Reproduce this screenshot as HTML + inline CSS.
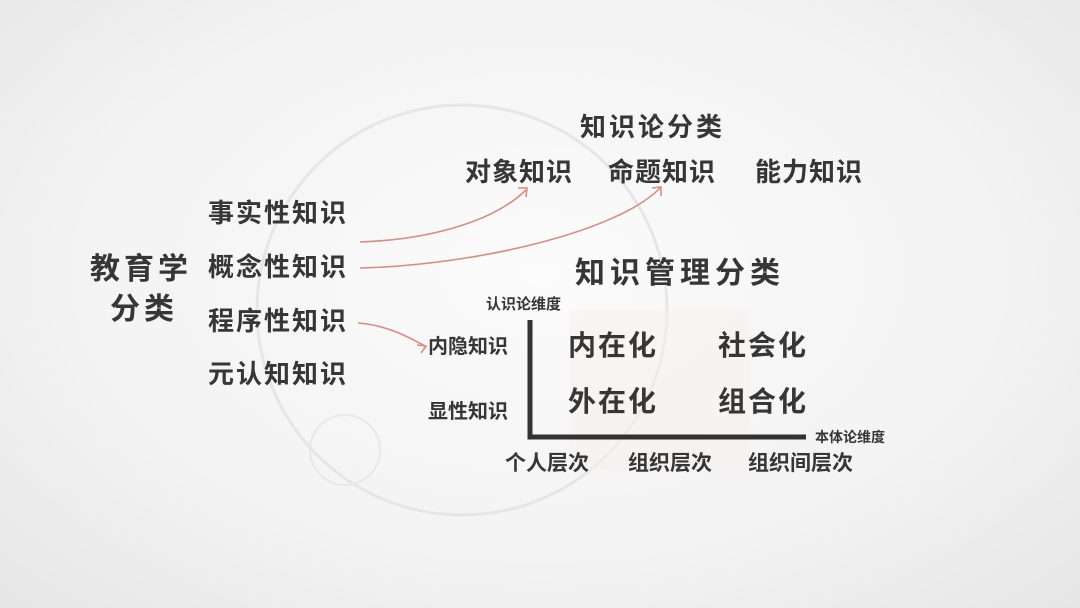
<!DOCTYPE html>
<html><head><meta charset="utf-8"><style>
html,body{margin:0;padding:0}
body{width:1080px;height:608px;position:relative;overflow:hidden;background:radial-gradient(ellipse at 50% 45%,#fbfbfb 0%,#f3f3f3 60%,#e6e6e6 100%);font-family:"Liberation Sans","Noto Sans CJK SC",sans-serif;color:#363636}
.t{position:absolute;white-space:nowrap;line-height:1;font-weight:bold}
</style></head><body>
<svg width="1080" height="608" style="position:absolute;left:0;top:0">
<circle cx="462" cy="310" r="205" fill="none" stroke="#e6e6e6" stroke-width="3"/>
<rect x="570" y="310" width="180" height="160" fill="#f7efed" opacity="0.5"/>
<circle cx="345" cy="450" r="35" fill="none" stroke="#e8e8e8" stroke-width="2"/>
<path d="M360 242 C420 240 490 225 526 190" fill="none" stroke="#d98b7e" stroke-width="1.6"/>
<path d="M518 188 L527 188 L526 197" fill="none" stroke="#d98b7e" stroke-width="1.6"/>
<path d="M360 268 C480 265 620 230 660 188" fill="none" stroke="#d98b7e" stroke-width="1.6"/>
<path d="M652 188 L661 187 L661 196" fill="none" stroke="#d98b7e" stroke-width="1.6"/>
<path d="M358 323 C385 325 405 335 425 346" fill="none" stroke="#d98b7e" stroke-width="1.6"/>
<path d="M417 345 L426 346 L421 353" fill="none" stroke="#d98b7e" stroke-width="1.6"/>
<path d="M530 320 L530 437 L806 437" fill="none" stroke="#333" stroke-width="5"/>
</svg>
<div class="t" style="left:580px;top:114px;font-size:26px;letter-spacing:3px">知识论分类</div>
<div class="t" style="left:465px;top:159px;font-size:26px;letter-spacing:1px">对象知识</div>
<div class="t" style="left:608px;top:159px;font-size:26px;letter-spacing:1px">命题知识</div>
<div class="t" style="left:755px;top:159px;font-size:26px;letter-spacing:1px">能力知识</div>
<div class="t" style="left:208px;top:200px;font-size:26px;letter-spacing:2px">事实性知识</div>
<div class="t" style="left:208px;top:254px;font-size:26px;letter-spacing:2px">概念性知识</div>
<div class="t" style="left:208px;top:308px;font-size:26px;letter-spacing:2px">程序性知识</div>
<div class="t" style="left:208px;top:361px;font-size:26px;letter-spacing:2px">元认知知识</div>
<div class="t" style="left:90px;top:255px;font-size:30px;letter-spacing:4px">教育学</div>
<div class="t" style="left:110px;top:295px;font-size:30px;letter-spacing:4px">分类</div>
<div class="t" style="left:575px;top:259px;font-size:30px;letter-spacing:5px">知识管理分类</div>
<div class="t" style="left:486px;top:297px;font-size:15px">认识论维度</div>
<div class="t" style="left:428px;top:337px;font-size:20px">内隐知识</div>
<div class="t" style="left:428px;top:402px;font-size:20px">显性知识</div>
<div class="t" style="left:568px;top:332px;font-size:28px;letter-spacing:2px">内在化</div>
<div class="t" style="left:718px;top:332px;font-size:28px;letter-spacing:2px">社会化</div>
<div class="t" style="left:568px;top:388px;font-size:28px;letter-spacing:2px">外在化</div>
<div class="t" style="left:718px;top:388px;font-size:28px;letter-spacing:2px">组合化</div>
<div class="t" style="left:815px;top:430px;font-size:14px">本体论维度</div>
<div class="t" style="left:505px;top:453px;font-size:21px">个人层次</div>
<div class="t" style="left:628px;top:453px;font-size:21px">组织层次</div>
<div class="t" style="left:748px;top:453px;font-size:21px">组织间层次</div>
</body></html>
